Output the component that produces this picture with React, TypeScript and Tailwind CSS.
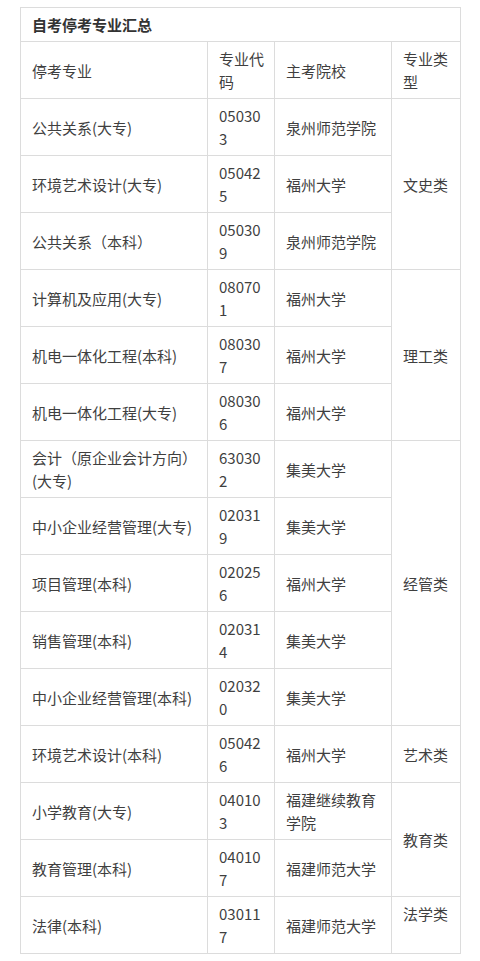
import React from "react";

type Row = {
  name: string;
  code: string;
  school: string;
  type?: { label: string; span: number; top?: boolean };
};

const rows: Row[] = [
  { name: "公共关系(大专)", code: "050303", school: "泉州师范学院", type: { label: "文史类", span: 3 } },
  { name: "环境艺术设计(大专)", code: "050425", school: "福州大学" },
  { name: "公共关系（本科）", code: "050309", school: "泉州师范学院" },
  { name: "计算机及应用(大专)", code: "080701", school: "福州大学", type: { label: "理工类", span: 3 } },
  { name: "机电一体化工程(本科)", code: "080307", school: "福州大学" },
  { name: "机电一体化工程(大专)", code: "080306", school: "福州大学" },
  { name: "会计（原企业会计方向）(大专)", code: "630302", school: "集美大学", type: { label: "经管类", span: 5 } },
  { name: "中小企业经营管理(大专)", code: "020319", school: "集美大学" },
  { name: "项目管理(本科)", code: "020256", school: "福州大学" },
  { name: "销售管理(本科)", code: "020314", school: "集美大学" },
  { name: "中小企业经营管理(本科)", code: "020320", school: "集美大学" },
  { name: "环境艺术设计(本科)", code: "050426", school: "福州大学", type: { label: "艺术类", span: 1 } },
  { name: "小学教育(大专)", code: "040103", school: "福建继续教育学院", type: { label: "教育类", span: 2 } },
  { name: "教育管理(本科)", code: "040107", school: "福建师范大学" },
  { name: "法律(本科)", code: "030117", school: "福建师范大学", type: { label: "法学类", span: 1, top: true } },
];

const cell = "border border-[#dcdcdc] pl-[11px] pr-[8px] py-[5px] leading-[23px] align-middle";

export default function App() {
  return (
    <div
      className="bg-white min-h-[961px] pt-[7px] pl-[20px] text-[15px] text-[#3f3f3f]"
      style={{ fontFamily: '"Noto Sans CJK SC", "Noto Sans", sans-serif' }}
    >
      <table className="border-collapse table-fixed w-[440px]">
        <colgroup>
          <col className="w-[187px]" />
          <col className="w-[67px]" />
          <col className="w-[117px]" />
          <col className="w-[69px]" />
        </colgroup>
        <tbody>
          <tr>
            <td colSpan={4} className={`${cell} font-bold text-[#333]`}>
              自考停考专业汇总
            </td>
          </tr>
          <tr>
            <td className={cell}>停考专业</td>
            <td className={cell}>专业代码</td>
            <td className={cell}>主考院校</td>
            <td className={cell}>专业类型</td>
          </tr>
          {rows.map((r, i) => (
            <tr key={i}>
              <td className={cell}>{r.name}</td>
              <td className={`${cell} break-all`}>{r.code}</td>
              <td className={cell}>{r.school}</td>
              {r.type && (
                <td rowSpan={r.type.span} className={`${cell} ${r.type.top ? "!align-top" : ""}`}>
                  {r.type.label}
                </td>
              )}
            </tr>
          ))}
        </tbody>
      </table>
    </div>
  );
}
